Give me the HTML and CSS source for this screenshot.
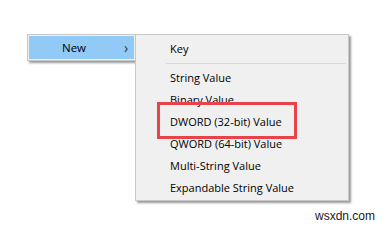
FILE: index.html
```html
<!DOCTYPE html>
<html>

<head>
    <title>New Value Menu</title>
    <meta name="viewport" content="width=device-width,initial-scale=1">
    <link rel="stylesheet" href="styles.css">
</head>

<body>
    <div class="menus">
        <div class="menu parent">
            <div class="item active">
                <span class="label">New</span>
                <span class="chevron">&#x203A;</span>
            </div>
        </div>
        <div class="menu submenu">
            <div class="item first">Key</div>
            <div class="separator"></div>
            <div class="item">String Value</div>
            <div class="item">Binary Value</div>
            <div class="item marked">
                DWORD (32-bit) Value
                <span class="callout"></span>
            </div>
            <div class="item">QWORD (64-bit) Value</div>
            <div class="item">Multi-String Value</div>
            <div class="item">Expandable String Value</div>
        </div>
    </div>
    <div class="watermark">wsxdn.com</div>
</body>

</html>
```

FILE: styles.css
```css
body {
    margin: 0;
    background-color: #ffffff;
    font-family: "Open Sans", "Noto Sans", sans-serif;
    font-size: 11px;
    color: #000000;
    width: 388px;
    height: 228px;
    overflow: hidden;
}

/* both menus sit side by side, the submenu overlaps the parent a bit */
.menus {
    display: flex;
    align-items: flex-start;
    padding: 34px 0 0 27px;
}

.menu {
    background-color: #f0f0f0;
    border: 1px solid #c8c8c8;
    box-shadow: 2px 2px 2px rgba(0, 0, 0, 0.4);
}

.parent {
    width: 105px;
    padding: 1px;
}

.parent .item.active {
    display: flex;
    align-items: center;
    height: 23px;
    background-color: #91c9f7;
    padding-left: 33px;
    font-size: 11.5px;
}

.parent .chevron {
    margin-left: 38px;
    font-size: 14px;
    color: #333333;
}

.submenu {
    position: relative;
    z-index: 1;
    margin-left: -1px;
    width: 212px;
    padding: 2px 0 1px 0;
}

.submenu .item {
    height: 22px;
    line-height: 22px;
    padding-left: 34px;
    white-space: nowrap;
}

.submenu .first {
    margin-top: 1px;
}

.separator {
    height: 1px;
    background-color: #d7d7d7;
    margin: 3px 2px 3px 30px;
}

.marked {
    position: relative;
}

/* red annotation box drawn over the DWORD row */
.callout {
    position: absolute;
    left: 21px;
    top: -9px;
    width: 134px;
    height: 31px;
    border: 3px solid #e8434b;
}

.watermark {
    position: absolute;
    left: 315px;
    top: 209px;
    font-family: "Liberation Sans", Arial, sans-serif;
    font-size: 12px;
    color: #1a1a1a;
}
```
